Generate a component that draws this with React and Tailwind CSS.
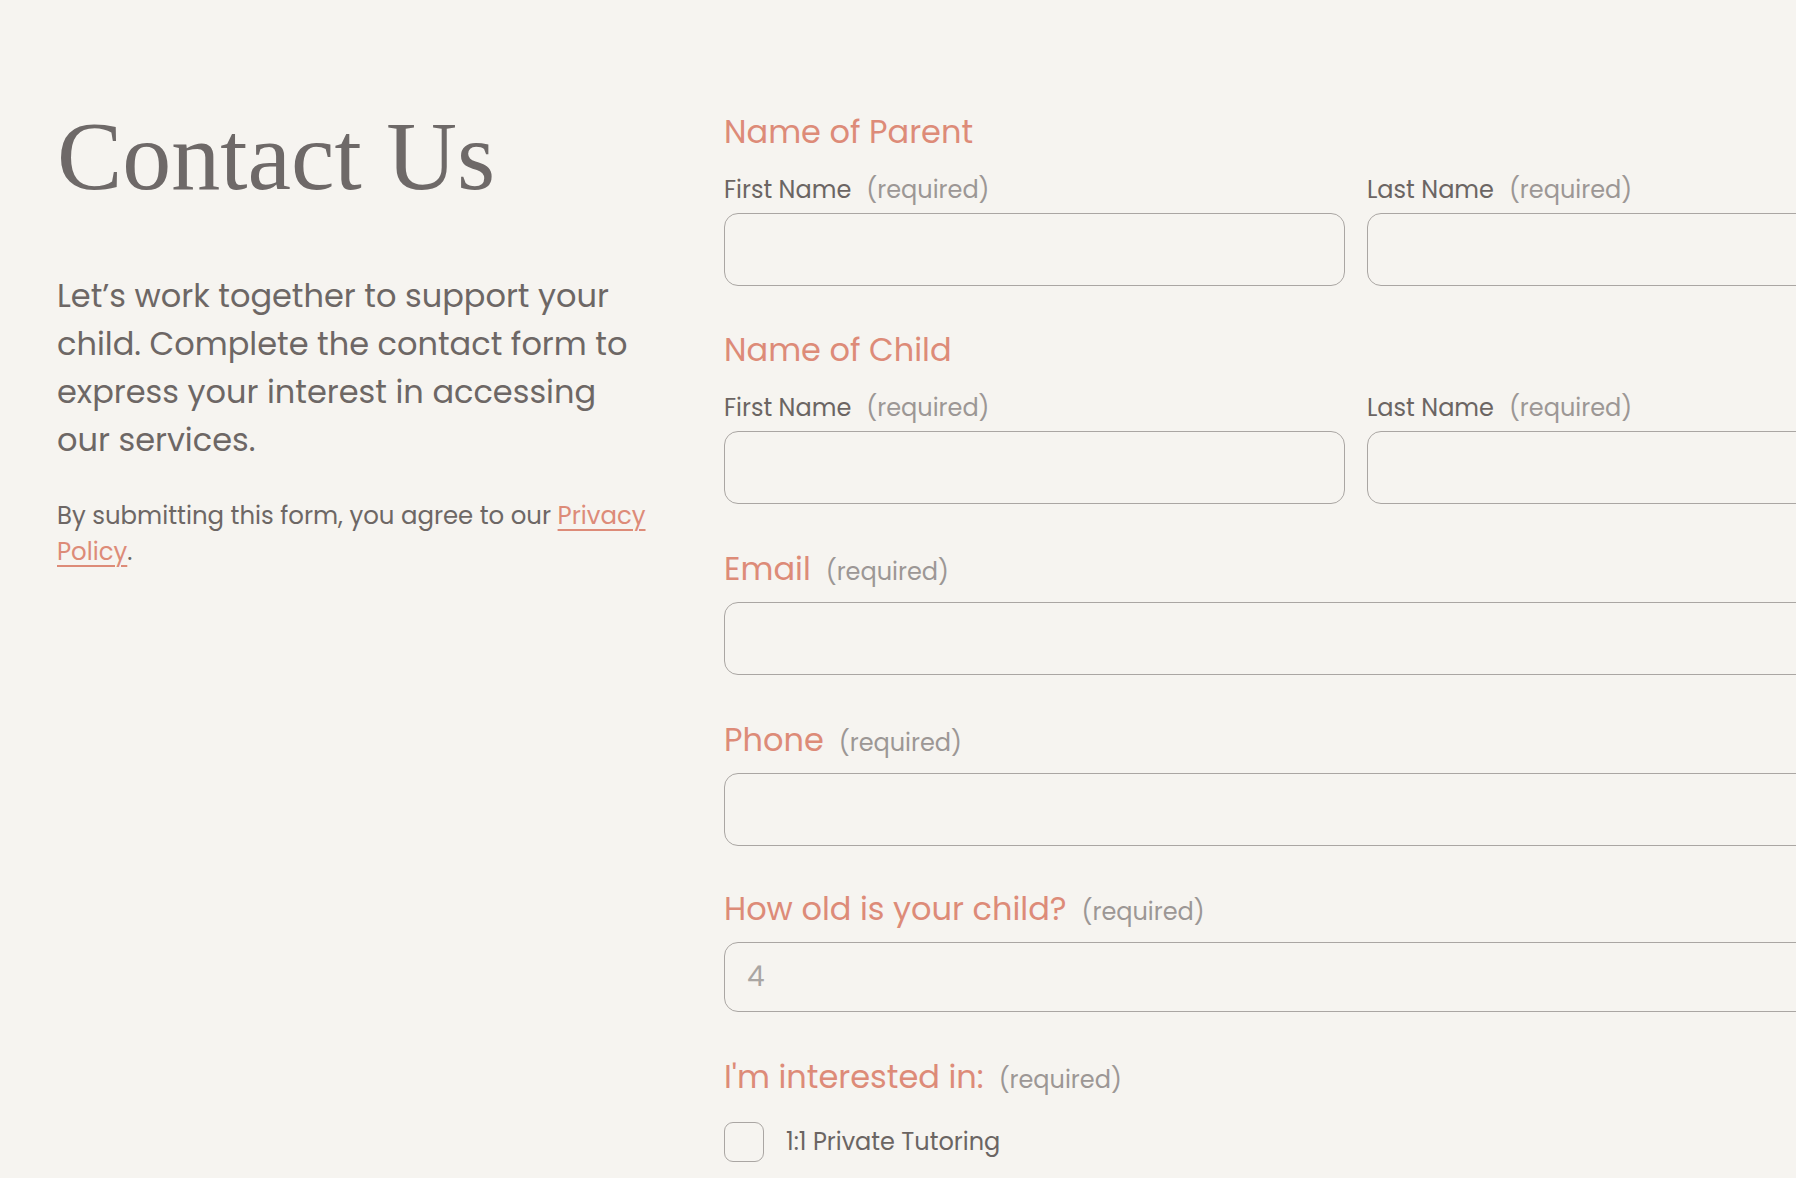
import React, { useState } from 'react';

const sans = { fontFamily: '"Poppins", "Open Sans", "Noto Sans", sans-serif' };

const Req = () => (
  <span className="ml-[15px] text-[24px] leading-[30px] text-[#9c9795]">(required)</span>
);

const inputCls =
  'block w-full rounded-[14px] border-[1.5px] border-[#aaa6a3] bg-transparent outline-none';

const NameGroup = ({ title, className }) => (
  <div className={className}>
    <h3 className="text-[32px] leading-[40px] text-[#dd8b78]">{title}</h3>
    <div className="mt-[23px] grid grid-cols-2 gap-x-[22px]">
      {['First Name', 'Last Name'].map((n) => (
        <div key={n}>
          <label className="flex items-baseline text-[24px] leading-[30px] text-[#6b6563]">
            {n}
            <Req />
          </label>
          <input className={`mt-[8px] h-[73px] ${inputCls}`} />
        </div>
      ))}
    </div>
  </div>
);

const Field = ({ title, className, placeholder, h = 'h-[73px]' }) => (
  <div className={className}>
    <label className="flex items-baseline text-[32px] leading-[40px] text-[#dd8b78]">
      {title}
      <Req />
    </label>
    <input
      placeholder={placeholder}
      className={`mt-[13px] px-[22px] text-[28px] text-[#6b6563] placeholder:text-[#aaa6a3] ${inputCls} ${h}`}
    />
  </div>
);

export default function App() {
  const [tutoring, setTutoring] = useState(false);

  return (
    <div className="min-h-screen w-full overflow-hidden bg-[#f6f4f0]" style={sans}>
      <div className="flex gap-[73px] pl-[57px]">
        {/* left column */}
        <div className="w-[594px] shrink-0 pt-[107px]">
          <h1
            className="text-[98px] leading-none text-[#6e6968]"
            style={{ fontFamily: '"Liberation Serif", "Times New Roman", serif' }}
          >
            Contact Us
          </h1>
          <p className="mt-[67px] text-[32px] leading-[48px] text-[#6d6765]">
            Let’s work together to support your child. Complete the contact form to express your interest in accessing our services.
          </p>
          <p className="mt-[34px] text-[24.4px] leading-[36px] text-[#6d6765]">
            By submitting this form, you agree to our{' '}
            <a href="#" className="text-[#dd8b78] underline decoration-[1.5px] underline-offset-[5px]">
              Privacy Policy
            </a>
            .
          </p>
        </div>

        {/* form */}
        <form className="w-[1264px] shrink-0 pt-[112px]">
          <NameGroup title="Name of Parent" />
          <NameGroup title="Name of Child" className="mt-[44px]" />
          <Field title="Email" className="mt-[45px]" />
          <Field title="Phone" className="mt-[45px]" />
          <Field title="How old is your child?" className="mt-[43px]" placeholder="4" h="h-[70px]" />

          <div className="mt-[45px]">
            <div className="flex items-baseline text-[32px] leading-[40px] text-[#dd8b78]">
              I'm interested in:
              <Req />
            </div>
            <label className="mt-[25px] flex items-center gap-[22px] text-[24px] text-[#6b6563]">
              <input
                type="checkbox"
                checked={tutoring}
                onChange={(e) => setTutoring(e.target.checked)}
                className="h-[40px] w-[40px] appearance-none rounded-[9px] border-[1.5px] border-[#aaa6a3] bg-transparent checked:bg-[#dd8b78]"
              />
              1:1 Private Tutoring
            </label>
          </div>
        </form>
      </div>
    </div>
  );
}
